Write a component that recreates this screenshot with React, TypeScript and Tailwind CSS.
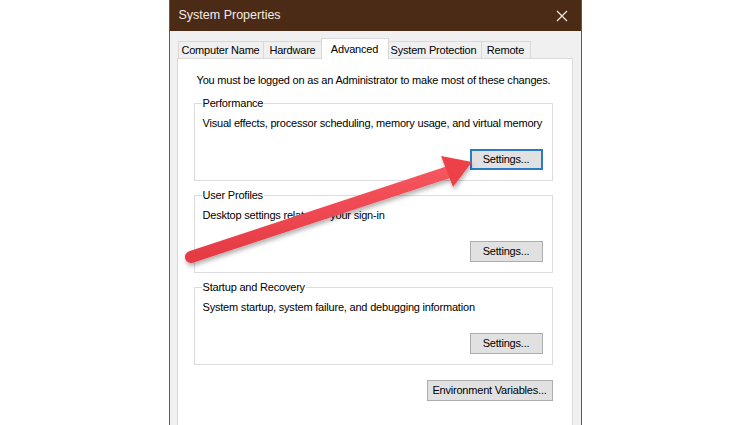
import React from 'react';

const font = { fontFamily: '"Liberation Sans", Arial, sans-serif' };

const tabs = [
  { label: 'Computer Name', w: 'w-[86px]' },
  { label: 'Hardware', w: 'w-[59px]' },
  { label: 'Advanced', w: 'w-[68px]', active: true },
  { label: 'System Protection', w: 'w-[95px]' },
  { label: 'Remote', w: 'w-[49px]' },
];

const txt = 'whitespace-nowrap text-[11px] tracking-[-0.2px] text-black';

const WinButton = ({ label, focused, className = '' }: { label: string; focused?: boolean; className?: string }) => (
  <div
    className={`flex h-[21px] items-center justify-center bg-[#e1e1e1] ${txt} ${focused ? 'border-2 border-[#2a7bc4]' : 'border border-[#adadad]'} ${className}`}
  >
    {label}
  </div>
);

const Group = ({ title, text, focused }: { title: string; text: string; focused?: boolean }) => (
  <div className="relative flex h-[78px] flex-col border border-[#dcdcdc]">
    <span className={`absolute -top-[8px] left-[7px] bg-white px-[1px] leading-[14px] ${txt}`}>{title}</span>
    <p className={`pl-[8px] pt-[12px] leading-[14px] ${txt}`}>{text}</p>
    <div className="mt-auto mb-[10px] mr-[9px] flex justify-end">
      <WinButton label="Settings..." focused={focused} className="w-[73px]" />
    </div>
  </div>
);

export default function App() {
  return (
    <div className="relative flex h-[425px] w-[750px] justify-center overflow-hidden bg-white" style={font}>
      <div className="flex h-[440px] w-[413px] shrink-0 flex-col border-x border-[#5c5c5c] bg-[#f0f0f0]">
        <div className="flex h-[31px] shrink-0 items-center justify-between bg-[#4b2b16] pl-[9px] pr-[9px]">
          <span className="text-[12.5px] text-[#f3ece6]">System Properties</span>
          <svg width="12" height="12" viewBox="0 0 12 12" className="mr-[4px]">
            <path d="M1 1 L11 11 M11 1 L1 11" stroke="#efe6dd" strokeWidth="1.3" />
          </svg>
        </div>
        <div className="flex flex-1 flex-col pl-[7px] pr-[8px] pt-[7px]">
          <div className="flex h-[20px] items-end pl-[1px]">
            {tabs.map((t) =>
              t.active ? (
                <div
                  key={t.label}
                  className={`relative z-10 -mx-[2px] -mb-[1px] flex h-[21px] items-start justify-center border border-b-0 border-[#d9d9d9] bg-white pt-[2px] ${txt} ${t.w}`}
                >
                  {t.label}
                </div>
              ) : (
                <div
                  key={t.label}
                  className={`flex h-[17px] items-center justify-center border border-b-0 border-l-0 border-[#d9d9d9] bg-[#f0f0f0] first:border-l ${txt} ${t.w}`}
                >
                  {t.label}
                </div>
              ),
            )}
          </div>
          <div className="flex flex-1 flex-col border border-[#d9d9d9] bg-white pl-[16px] pr-[19px] pt-[14px]">
            <p className={`pl-[3px] leading-[14px] ${txt}`}>
              You must be logged on as an Administrator to make most of these changes.
            </p>
            <div className="mt-[16px] flex flex-col gap-[14px]">
              <Group title="Performance" text="Visual effects, processor scheduling, memory usage, and virtual memory" focused />
              <Group title="User Profiles" text="Desktop settings related to your sign-in" />
              <Group title="Startup and Recovery" text="System startup, system failure, and debugging information" />
            </div>
            <div className="mt-[15px] flex justify-end">
              <WinButton label="Environment Variables..." className="w-[126px]" />
            </div>
          </div>
        </div>
      </div>
      <svg className="pointer-events-none absolute left-0 top-0" width="750" height="425" viewBox="0 0 750 425">
        <defs>
          <filter id="sh" x="-10%" y="-10%" width="130%" height="150%">
            <feDropShadow dx="1" dy="3" stdDeviation="2" floodColor="#000" floodOpacity="0.3" />
          </filter>
          <linearGradient id="rg" x1="0" y1="0" x2="0" y2="1">
            <stop offset="0" stopColor="#f6555e" />
            <stop offset="1" stopColor="#e53a44" />
          </linearGradient>
        </defs>
        <g filter="url(#sh)">
          <line x1="191" y1="257" x2="452" y2="171" stroke="url(#rg)" strokeWidth="12" strokeLinecap="round" />
          <polygon points="472,162 441,156 453,187" fill="#ee4049" />
        </g>
      </svg>
    </div>
  );
}
